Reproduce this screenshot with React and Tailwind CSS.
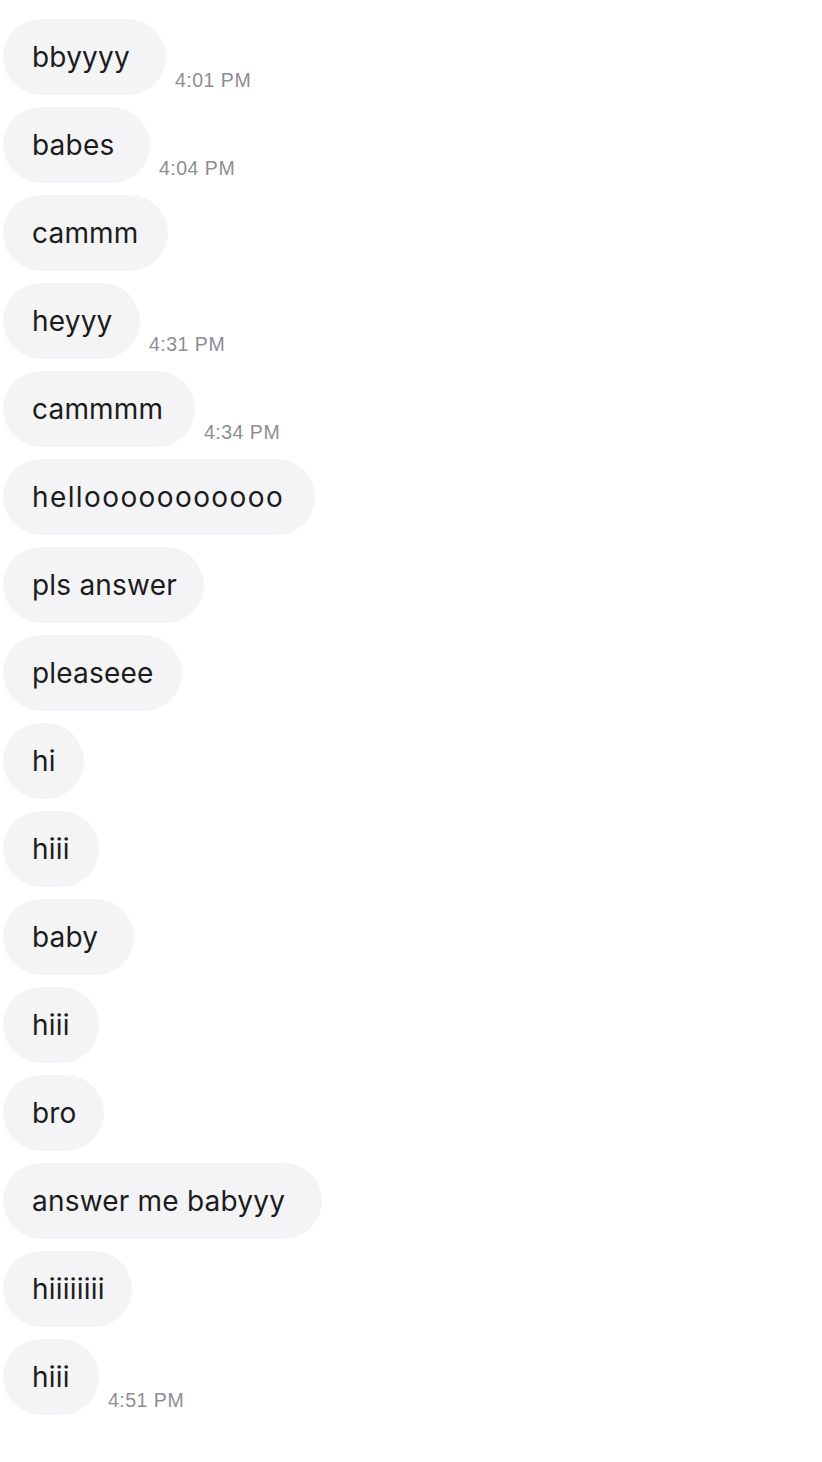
import React from 'react';

const messages = [
  { text: 'bbyyyy', time: '4:01 PM', w: 'w-[163px]' },
  { text: 'babes', time: '4:04 PM', w: 'w-[147px]' },
  { text: 'cammm', w: 'w-[165px]' },
  { text: 'heyyy', time: '4:31 PM', w: 'w-[137px]' },
  { text: 'cammmm', time: '4:34 PM', w: 'w-[192px]' },
  { text: 'hellooooooooooo', w: 'w-[312px]', track: 'tracking-[1.4px]' },
  { text: 'pls answer', w: 'w-[201px]' },
  { text: 'pleaseee', w: 'w-[179px]' },
  { text: 'hi', w: 'w-[81px]' },
  { text: 'hiii', w: 'w-[96px]' },
  { text: 'baby', w: 'w-[131px]' },
  { text: 'hiii', w: 'w-[96px]' },
  { text: 'bro', w: 'w-[101px]' },
  { text: 'answer me babyyy', w: 'w-[319px]' },
  { text: 'hiiiiiiii', w: 'w-[129px]' },
  { text: 'hiii', time: '4:51 PM', w: 'w-[96px]' },
];

export default function App() {
  return (
    <div className="min-h-screen w-[822px] bg-white pt-[19px] pl-[3px] font-['Inter',sans-serif]">
      <div className="flex flex-col gap-[12px]">
        {messages.map((m, i) => (
          <div key={i} className="flex items-end">
            <div className={`${m.w} h-[76px] shrink-0 rounded-full bg-[#f4f4f6] flex items-center pl-[29px] text-[28px] text-[#1c1c1e] ${m.track || 'tracking-[0.2px]'}`}>
              <span className="leading-none -mt-[1px]">{m.text}</span>
            </div>
            {m.time && (
              <span className="ml-[9px] mb-[5px] text-[19.5px] leading-none text-[#8e8e93] font-['Liberation_Sans',sans-serif] tracking-[0.5px]">
                {m.time}
              </span>
            )}
          </div>
        ))}
      </div>
    </div>
  );
}
